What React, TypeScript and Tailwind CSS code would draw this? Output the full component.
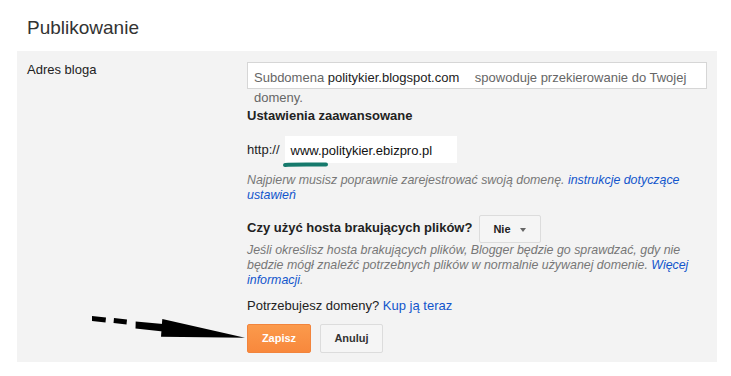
import React from "react";

export default function App() {
  return (
    <div
      className="relative w-[731px] h-[376px] overflow-hidden bg-white text-[#222]"
      style={{ fontFamily: '"Liberation Sans", Arial, sans-serif' }}
    >
      <div className="pl-[27px] pt-[16px] text-[19px] leading-[24px] text-[#333]">Publikowanie</div>

      <div className="mt-[11px] ml-[17px] w-[700px] bg-[#f3f3f3] pt-[11px] pb-[9px] flex">
        <div className="w-[230px] pl-[10px] text-[13px] leading-[16px] text-[#222]">Adres bloga</div>

        <div className="w-[460px] text-[13px]">
          <div className="h-[27px] border border-[#d6d6d6] bg-white pl-[6px] pr-[6px] pt-[5px] leading-[20px] text-[#666]">
            Subdomena <span className="text-[#222] mr-[12px]">politykier.blogspot.com</span> spowoduje przekierowanie do Twojej domeny.
          </div>

          <div className="mt-[19px] font-bold leading-[16px] text-[#222]">Ustawienia zaawansowane</div>

          <div className="mt-[12px] flex items-center">
            <span className="leading-[16px] text-[#222]">http://</span>
            <div className="relative ml-[5px] h-[27px] w-[172px] bg-white pl-[6px] pt-[7px] leading-[16px] text-[#111]">
              www.politykier.ebizpro.pl
              <svg className="absolute left-[-3px] top-[25px]" width="48" height="8" viewBox="0 0 48 8">
                <path d="M3 4 C 12 3.2, 30 3.6, 44 3.6" stroke="#167a6c" strokeWidth="4" strokeLinecap="round" fill="none" />
              </svg>
            </div>
          </div>

          <div className="mt-[10px] italic text-[12.4px] leading-[15px] text-[#777]">
            Najpierw musisz poprawnie zarejestrować swoją domenę.{" "}
            <span className="text-[#1155cc]">instrukcje dotyczące ustawień</span>
          </div>

          <div className="mt-[12px] flex items-center">
            <span className="font-bold leading-[16px] text-[#222] -mt-[2px]">Czy użyć hosta brakujących plików?</span>
            <div className="ml-[7px] flex h-[28px] w-[62px] items-center rounded-[2px] border border-[#dcdcdc] bg-[#f5f5f5] pl-[13px] text-[11px] font-bold text-[#222]">
              Nie
              <span className="ml-[9px] mt-[1px] h-0 w-0 border-l-[3px] border-r-[3px] border-t-[4px] border-l-transparent border-r-transparent border-t-[#666]" />
            </div>
          </div>

          <div className="italic text-[12.4px] leading-[15px] text-[#777]">
            Jeśli określisz hosta brakujących plików, Blogger będzie go sprawdzać, gdy nie będzie mógł znaleźć potrzebnych plików w normalnie używanej domenie.{" "}
            <span className="text-[#1155cc]">Więcej informacji</span>.
          </div>

          <div className="mt-[10px] leading-[16px] text-[#222]">
            Potrzebujesz domeny? <span className="text-[#1155cc]">Kup ją teraz</span>
          </div>

          <div className="mt-[10px] flex gap-[9px]">
            <div className="flex h-[29px] w-[64px] items-center justify-center rounded-[2px] border border-[#f2843c] bg-gradient-to-b from-[#fb9a4c] to-[#f8883c] text-[11px] font-bold text-white">
              Zapisz
            </div>
            <div className="flex h-[29px] w-[63px] items-center justify-center rounded-[2px] border border-[#dcdcdc] bg-[#f5f5f5] text-[11px] font-bold text-[#333]">
              Anuluj
            </div>
          </div>
        </div>
      </div>

      <svg className="absolute left-[88px] top-[312px]" width="162" height="30" viewBox="0 0 162 30">
        <polygon points="4,4 18,5.5 17.5,10.5 4,9" fill="#000" />
        <polygon points="26,6 39,7.5 38.5,12.5 25.5,11" fill="#000" />
        <polygon points="47.7,9.5 75,12 75,19.5 47.5,16.5" fill="#000" />
        <polygon points="74.3,7 73,24.7 157,25.7" fill="#000" />
      </svg>
    </div>
  );
}
